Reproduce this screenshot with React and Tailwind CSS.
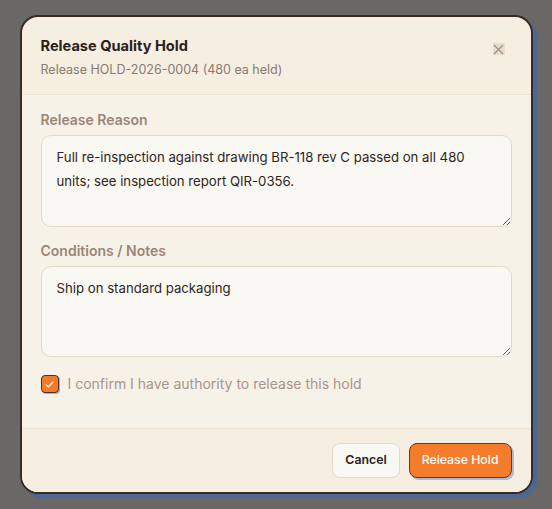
import React, { useState } from 'react';

function App() {
  const [reason, setReason] = useState("Full re-inspection against drawing BR-118 rev C passed on all 480 units; see inspection report QIR-0356.");
  const [notes, setNotes] = useState("Ship on standard packaging");
  const [confirmed, setConfirmed] = useState(true);

  return (
    <div className="min-h-[509px] w-full bg-[#6a6867] flex items-start justify-center pt-[15px] font-['Inter',sans-serif]">
      {/* Dialog */}
      <div className="w-[513px] rounded-[18px] border-2 border-[#3b2a24] bg-[#f5eee1] shadow-[4px_4px_0_#4a6796] overflow-hidden">
        {/* Header */}
        <div className="relative px-[19px] pt-[19px] pb-[15px] border-b border-[#ebe2d2]">
          <h2 className="text-[14.6px] font-bold text-[#2b201c] leading-[20px]">Release Quality Hold</h2>
          <p className="mt-[5px] text-[12.5px] text-[#8a7a72] leading-[18px]">Release HOLD-2026-0004 (480 ea held)</p>
          <button className="absolute right-[26px] top-[26px] w-[12px] h-[12px] flex items-center justify-center bg-[#e8ddcd] text-[#a0908a]">
            <svg width="11" height="11" viewBox="0 0 11 11" fill="none" stroke="currentColor" strokeWidth="1.3">
              <path d="M1 1l9 9M10 1l-9 9" />
            </svg>
          </button>
        </div>

        {/* Body */}
        <div className="bg-[#f7f2e7] px-[19px] pt-[16px] pb-[35px] flex flex-col">
          <label className="text-[14px] font-semibold text-[#9b857a] leading-[18px]">Release Reason</label>
          <textarea
            className="mt-[6px] h-[92px] w-full rounded-[10px] border border-[#e3d9c9] bg-[#faf8f2] px-[15px] py-[9px] text-[13.2px] leading-[24px] text-[#2f2521] outline-none resize-y"
            value={reason}
            onChange={e => setReason(e.target.value)}
          />

          <label className="mt-[15px] text-[14px] font-semibold text-[#9b857a] leading-[18px]">Conditions / Notes</label>
          <textarea
            className="mt-[6px] h-[91px] w-full rounded-[10px] border border-[#e3d9c9] bg-[#faf8f2] px-[15px] py-[9px] text-[13.2px] leading-[24px] text-[#2f2521] outline-none resize-y"
            value={notes}
            onChange={e => setNotes(e.target.value)}
          />

          <label className="mt-[18px] flex items-center gap-[9px] cursor-pointer">
            <span
              onClick={() => setConfirmed(!confirmed)}
              className={confirmed
                ? "w-[18px] h-[18px] rounded-[4px] border border-[#4a3428] bg-[#f47a2c] flex items-center justify-center shadow-[1px_1px_0_#9db4d8]"
                : "w-[18px] h-[18px] rounded-[4px] border border-[#4a3428] bg-[#faf8f2] flex items-center justify-center"}
            >
              {confirmed && (
                <svg width="11" height="11" viewBox="0 0 12 12" fill="none" stroke="#fff4e8" strokeWidth="1.4" strokeLinecap="round" strokeLinejoin="round">
                  <path d="M2.5 6.5l2.3 2.2L9.5 3.5" />
                </svg>
              )}
            </span>
            <span className="text-[14px] text-[#a8958b] leading-[18px]">I confirm I have authority to release this hold</span>
          </label>
        </div>

        {/* Footer */}
        <div className="border-t border-[#ebe2d2] bg-[#f5eee1] px-[19px] pt-[14px] pb-[14px] flex justify-end gap-[9px]">
          <button className="h-[35px] px-[12px] rounded-[8px] border border-[#e3d9c9] bg-[#faf8f2] text-[12.3px] font-semibold text-[#2b201c]">
            Cancel
          </button>
          <button className="h-[35px] px-[12px] rounded-[8px] border border-[#5a3a2a] bg-[#f57c2b] text-[12.3px] font-medium text-white shadow-[2px_2px_0_#a8bcd8]">
            Release Hold
          </button>
        </div>
      </div>
    </div>
  );
}

export default App;
